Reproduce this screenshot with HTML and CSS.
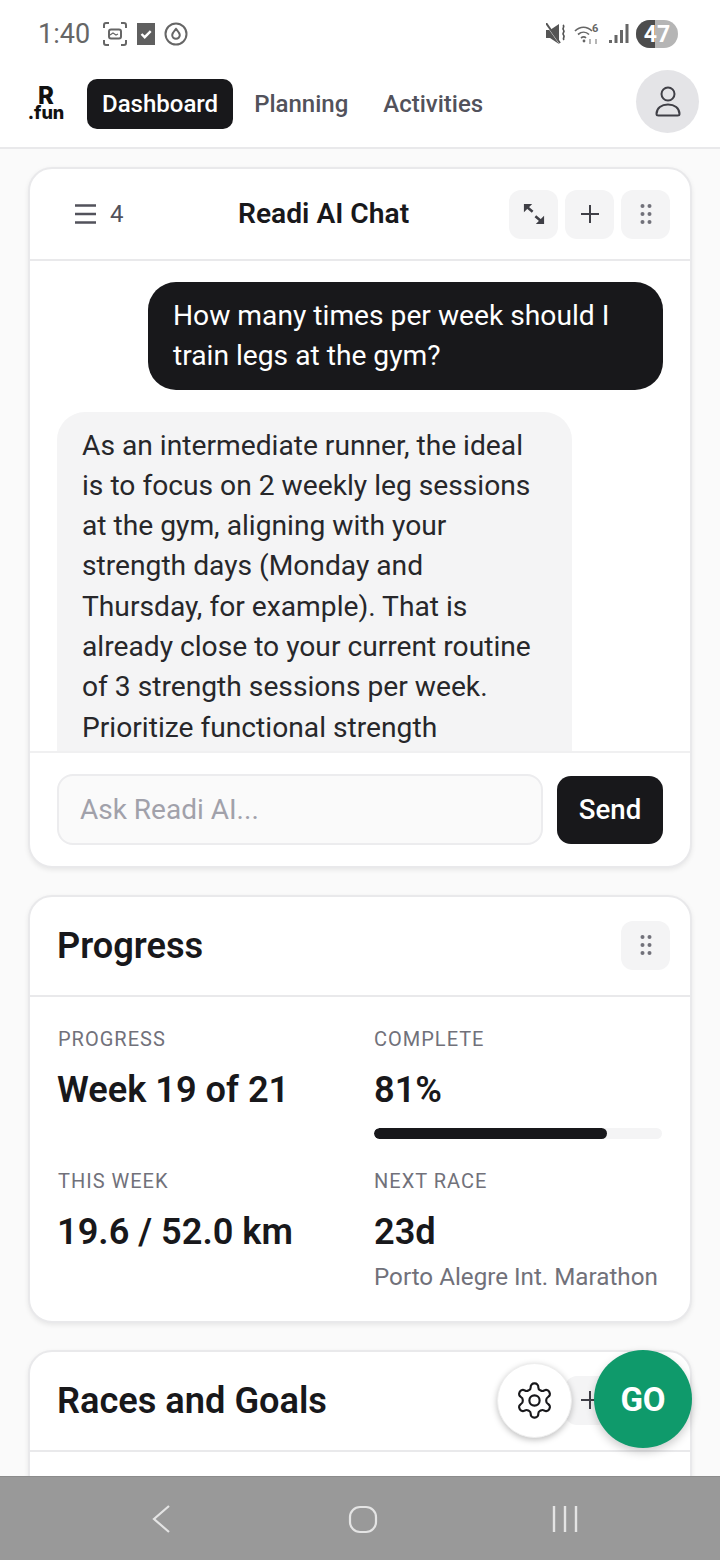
FILE: index.html
```html
<!DOCTYPE html>
<html lang="en">
<head>
    <meta charset="UTF-8">
    <meta name="viewport" content="width=device-width, initial-scale=1.0">
    <title>Readi Dashboard</title>
    <link rel="stylesheet" href="styles.css">
</head>
<body>
    <div class="screen">
        <div class="status-bar">
            <div class="status-left">
                <span class="clock">1:40</span>
                <svg class="status-icon" width="26" height="26" viewBox="0 0 26 26" fill="none" stroke="#666" stroke-width="2">
                    <path d="M2 7V4a2 2 0 0 1 2-2h3M19 2h3a2 2 0 0 1 2 2v3M24 19v3a2 2 0 0 1-2 2h-3M7 24H4a2 2 0 0 1-2-2v-3"/>
                    <rect x="7" y="8.500" width="12" height="9" rx="2"/>
                    <path d="M8 14l3-2 3 2 2-1" stroke-width="1.200"/>
                </svg>
                <svg class="status-icon" width="18" height="22" viewBox="0 0 18 22">
                    <rect width="18" height="22" fill="#5f5f5f"/>
                    <path d="M4.500 11l3.200 3.200 6-6" fill="none" stroke="#fff" stroke-width="2.400"/>
                </svg>
                <svg class="status-icon" width="24" height="24" viewBox="0 0 24 24" fill="none" stroke="#666" stroke-width="2">
                    <circle cx="12" cy="12" r="10.500"/>
                    <path d="M12 7c2 2.400 3.800 3.900 3.800 6a3.800 3.800 0 0 1-7.600 0c0-2.100 1.800-3.600 3.800-6z"/>
                </svg>
            </div>
            <div class="status-right">
                <svg width="21" height="22" viewBox="0 0 21 22" fill="#555">
                    <path d="M0 7h4l9-6v20l-9-6H0z"/>
                    <path d="M0 1l14 20" stroke="#fff" stroke-width="1.400"/>
                    <path d="M0 0l14 20" stroke="#555" stroke-width="2"/>
                    <path d="M17 2c2.500 2-1.500 3 .5 5s-2 3 0 5-1.500 3 .5 5" fill="none" stroke="#555" stroke-width="1.700"/>
                </svg>
                <svg width="28" height="22" viewBox="0 0 28 22" fill="none" stroke="#666" stroke-width="1.700">
                    <path d="M1 8c5-5 12-5 17 0M4 11.500c3.500-3 8-3 11 0M7 15c2-1.500 3.500-1.500 5 0"/>
                    <circle cx="10" cy="18" r="1.400" fill="#666" stroke="none"/>
                    <path d="M16 16v5M22 16v5" stroke="#aaa"/>
                    <text x="18" y="9" class="wifi-six">6</text>
                </svg>
                <svg width="20" height="20" viewBox="0 0 20 20" fill="#666">
                    <rect x="0" y="16" width="3" height="3"/>
                    <rect x="5.500" y="11" width="3" height="8"/>
                    <rect x="11" y="6" width="3" height="13"/>
                    <rect x="16.500" y="0" width="3" height="19"/>
                </svg>
                <div class="battery"><span class="battery-fill"></span><span class="battery-text">47</span></div>
            </div>
        </div>

        <header class="topnav">
            <div class="logo"><span class="logo-r">R</span><span class="logo-fun">.fun</span></div>
            <nav class="nav-links">
                <a class="nav-link active">Dashboard</a>
                <a class="nav-link">Planning</a>
                <a class="nav-link">Activities</a>
            </nav>
            <div class="avatar">
                <svg width="28" height="32" viewBox="0 0 28 32" fill="none" stroke="#3f3f46" stroke-width="2">
                    <circle cx="14" cy="8" r="6.500"/>
                    <path d="M2.500 28c0-6 5-9.500 11.500-9.500s11.500 3.500 11.500 9.500c0 1-1 1.500-2 1.500h-19c-1 0-2-.5-2-1.500z"/>
                </svg>
            </div>
        </header>

        <main class="content">
            <section class="card chat-card">
                <div class="card-head chat-head">
                    <div class="chat-count">
                        <svg width="21" height="20" viewBox="0 0 21 20" stroke="#52525b" stroke-width="2.400">
                            <path d="M0 1.500h21M0 10h21M0 18.500h21"/>
                        </svg>
                        <span>4</span>
                    </div>
                    <h2 class="chat-title">Readi AI Chat</h2>
                    <div class="tool-row">
                        <button class="tool-btn">
                            <svg width="22" height="22" viewBox="0 0 24 24" fill="none" stroke="#3f3f46" stroke-width="2.800">
                                <path d="M5 5l5.500 4.500M19 19l-5.500-4.500"/>
                                <path d="M1 10V1h9z M23 14v9h-9z" fill="#3f3f46" stroke="none"/>
                            </svg>
                        </button>
                        <button class="tool-btn">
                            <svg width="20" height="20" viewBox="0 0 20 20" stroke="#3f3f46" stroke-width="2"><path d="M10 1v18M1 10h18"/></svg>
                        </button>
                        <button class="tool-btn">
                            <svg width="14" height="22" viewBox="0 0 14 22" fill="#71717a">
                                <circle cx="3.500" cy="3" r="2"/><circle cx="10.500" cy="3" r="2"/>
                                <circle cx="3.500" cy="11" r="2"/><circle cx="10.500" cy="11" r="2"/>
                                <circle cx="3.500" cy="19" r="2"/><circle cx="10.500" cy="19" r="2"/>
                            </svg>
                        </button>
                    </div>
                </div>
                <div class="messages">
                    <div class="bubble bubble-user">How many times per week should I train legs at the gym?</div>
                    <div class="bubble bubble-ai">As an intermediate runner, the ideal is to focus on 2 weekly leg sessions at the gym, aligning with your strength days (Monday and Thursday, for example). That is already close to your current routine of 3 strength sessions per week. Prioritize functional strength</div>
                </div>
                <div class="composer">
                    <input class="chat-input" type="text" placeholder="Ask Readi AI...">
                    <button class="send-btn">Send</button>
                </div>
            </section>

            <section class="card">
                <div class="card-head section-head">
                    <h2 class="section-title">Progress</h2>
                    <button class="tool-btn">
                        <svg width="14" height="22" viewBox="0 0 14 22" fill="#71717a">
                            <circle cx="3.500" cy="3" r="2"/><circle cx="10.500" cy="3" r="2"/>
                            <circle cx="3.500" cy="11" r="2"/><circle cx="10.500" cy="11" r="2"/>
                            <circle cx="3.500" cy="19" r="2"/><circle cx="10.500" cy="19" r="2"/>
                        </svg>
                    </button>
                </div>
                <div class="stats">
                    <div class="stat">
                        <div class="stat-label">PROGRESS</div>
                        <div class="stat-value">Week 19 of 21</div>
                    </div>
                    <div class="stat">
                        <div class="stat-label">COMPLETE</div>
                        <div class="stat-value">81%</div>
                        <div class="bar"><div class="bar-fill" style="width: 81%"></div></div>
                    </div>
                    <div class="stat">
                        <div class="stat-label">THIS WEEK</div>
                        <div class="stat-value">19.6 / 52.0 km</div>
                    </div>
                    <div class="stat">
                        <div class="stat-label">NEXT RACE</div>
                        <div class="stat-value">23d</div>
                        <div class="stat-note">Porto Alegre Int. Marathon</div>
                    </div>
                </div>
            </section>

            <section class="card">
                <div class="card-head section-head">
                    <h2 class="section-title">Races and Goals</h2>
                    <div class="tool-row">
                        <button class="tool-btn">
                            <svg width="20" height="20" viewBox="0 0 20 20" stroke="#3f3f46" stroke-width="2"><path d="M10 1v18M1 10h18"/></svg>
                        </button>
                        <button class="tool-btn"></button>
                    </div>
                </div>
                <div class="card-rest"></div>
            </section>
        </main>

        <button class="fab-settings">
            <svg width="41" height="41" viewBox="0 0 24 24" fill="none" stroke="#18181b" stroke-width="1.250" stroke-linecap="round" stroke-linejoin="round">
                <path d="M12.220 2h-.44a2 2 0 0 0-2 2v.18a2 2 0 0 1-1 1.730l-.43.25a2 2 0 0 1-2 0l-.15-.08a2 2 0 0 0-2.730.73l-.22.38a2 2 0 0 0 .73 2.730l.15.1a2 2 0 0 1 1 1.720v.51a2 2 0 0 1-1 1.740l-.15.09a2 2 0 0 0-.73 2.730l.22.38a2 2 0 0 0 2.730.73l.15-.08a2 2 0 0 1 2 0l.43.25a2 2 0 0 1 1 1.730V20a2 2 0 0 0 2 2h.44a2 2 0 0 0 2-2v-.18a2 2 0 0 1 1-1.730l.43-.25a2 2 0 0 1 2 0l.15.08a2 2 0 0 0 2.730-.73l.22-.39a2 2 0 0 0-.73-2.730l-.15-.08a2 2 0 0 1-1-1.740v-.5a2 2 0 0 1 1-1.740l.15-.09a2 2 0 0 0 .73-2.730l-.22-.38a2 2 0 0 0-2.730-.73l-.15.08a2 2 0 0 1-2 0l-.43-.25a2 2 0 0 1-1-1.730V4a2 2 0 0 0-2-2z"/>
                <circle cx="12" cy="12" r="3"/>
            </svg>
        </button>
        <button class="fab-go">GO</button>

        <div class="system-nav">
            <svg width="20" height="30" viewBox="0 0 20 30" fill="none" stroke="#e4e4e4" stroke-width="2.200"><path d="M18 2L3 15l15 13"/></svg>
            <svg class="home-icon" width="30" height="30" viewBox="0 0 30 30" fill="none" stroke="#e4e4e4" stroke-width="2.200"><rect x="2" y="3" width="26" height="25" rx="10"/></svg>
            <svg width="28" height="28" viewBox="0 0 28 28" stroke="#e4e4e4" stroke-width="2.400"><path d="M3 1v26M14 1v26M25 1v26"/></svg>
        </div>
    </div>
</body>
</html>
```

FILE: styles.css
```css
* {
    box-sizing: border-box;
}
html, body {
    margin: 0;
    padding: 0;
}
body {
    font-family: Roboto, "Liberation Sans", sans-serif;
    color: #18181b;
    background: #fff;
}
.screen {
    position: relative;
    width: 720px;
    height: 1560px;
    display: flex;
    flex-direction: column;
    overflow: hidden;
}
.status-bar {
    height: 66px;
    flex-shrink: 0;
    display: flex;
    justify-content: space-between;
    align-items: center;
    padding: 2px 42px 0 38px;
}
.status-left, .status-right {
    display: flex;
    align-items: center;
}
.status-left {
    gap: 9px;
}
.status-right {
    gap: 7px;
}
.clock {
    font-size: 27px;
    color: #666;
    margin-right: 3px;
}
.wifi-six {
    font-size: 11px;
    font-weight: 700;
    fill: #666;
    stroke: none;
}
.battery {
    position: relative;
    width: 42px;
    height: 28px;
    border-radius: 14px;
    background: #b5b5b5;
    overflow: hidden;
    display: flex;
    align-items: center;
    justify-content: center;
}
.battery-fill {
    position: absolute;
    left: 0;
    top: 0;
    bottom: 0;
    width: 19px;
    background: #4d4d4d;
}
.battery-text {
    position: relative;
    color: #fff;
    font-size: 23px;
    font-weight: 700;
}
.topnav {
    height: 83px;
    flex-shrink: 0;
    display: flex;
    align-items: center;
    padding: 0 21px 6px 28px;
    border-bottom: 2px solid #e9e9eb;
}
.logo {
    width: 36px;
    display: flex;
    flex-direction: column;
    align-items: center;
    line-height: 1;
    font-weight: 800;
    color: #111;
    font-family: Inter, Roboto, sans-serif;
}
.logo-r {
    font-size: 24px;
    line-height: 19px;
}
.logo-fun {
    font-size: 18px;
    line-height: 16px;
}
.nav-links {
    display: flex;
    align-items: center;
    margin-left: 23px;
    flex: 1;
    gap: 7px;
}
.nav-link {
    font-size: 24px;
    font-weight: 500;
    color: #52525b;
    padding: 0 14px;
    height: 50px;
    line-height: 50px;
    border-radius: 10px;
}
.nav-link.active {
    background: #18181b;
    color: #fff;
    padding: 0 15px;
}
.avatar {
    width: 63px;
    height: 63px;
    border-radius: 50%;
    background: #e4e4e7;
    display: flex;
    align-items: center;
    justify-content: center;
    margin-bottom: 4px;
}
.content {
    flex: 1;
    min-height: 0;
    overflow: hidden;
    background: #fafafa;
    padding: 18px 28px 0;
    display: flex;
    flex-direction: column;
    gap: 27px;
}
.card {
    flex-shrink: 0;
    background: #fff;
    border: 2px solid #e9e9eb;
    border-radius: 24px;
    box-shadow: 0 2px 5px rgba(0, 0, 0, 0.08);
}
.card-head {
    display: flex;
    align-items: center;
    border-bottom: 2px solid #e9e9eb;
}
.chat-head {
    height: 92px;
    padding: 0 20px 0 45px;
}
.chat-count {
    width: 139px;
    display: flex;
    align-items: center;
    gap: 14px;
    font-size: 24px;
    color: #52525b;
}
.chat-title {
    flex: 1;
    margin: 0 0 2px;
    padding-left: 24px;
    font-size: 28.200px;
    font-weight: 600;
    color: #18181b;
}
.tool-row {
    display: flex;
    gap: 7px;
}
.tool-btn {
    width: 49px;
    height: 49px;
    border: 0;
    border-radius: 12px;
    background: #f4f4f5;
    padding: 0;
    display: flex;
    align-items: center;
    justify-content: center;
}
.messages {
    height: 492px;
    overflow: hidden;
    padding: 21px 27px 0;
    display: flex;
    flex-direction: column;
    gap: 22px;
    border-bottom: 2px solid #f0f0f1;
}
.bubble {
    flex-shrink: 0;
    width: 515px;
    padding: 14px 25px 13px;
    font-size: 28.200px;
    line-height: 40.300px;
    border-radius: 28px;
}
.bubble-user {
    align-self: flex-end;
    background: #18181b;
    color: #fff;
}
/* message runs on under the composer in the real app */
.bubble-ai {
    align-self: flex-start;
    background: #f4f4f5;
    color: #27272a;
    padding-right: 37px;
    padding-bottom: 80px;
}
.composer {
    height: 113px;
    display: flex;
    align-items: center;
    gap: 14px;
    padding: 0 27px;
}
.chat-input {
    flex: 1;
    min-width: 0;
    height: 71px;
    border: 2px solid #ececee;
    border-radius: 16px;
    background: #fafafa;
    padding: 0 21px;
    font-family: inherit;
    font-size: 28px;
}
.chat-input::placeholder {
    color: #a1a1aa;
}
.send-btn {
    width: 106px;
    height: 68px;
    border: 0;
    border-radius: 14px;
    background: #18181b;
    color: #fff;
    font-family: inherit;
    font-size: 27.600px;
    font-weight: 500;
}
.section-head {
    height: 100px;
    justify-content: space-between;
    padding: 0 20px 2px 27px;
}
.section-title {
    margin: 0;
    font-size: 36.200px;
    font-weight: 600;
    color: #18181b;
}
.stats {
    display: grid;
    grid-template-columns: 316px 289px;
    row-gap: 30px;
    padding: 30px 28px 28px 27px;
}
.stat-label {
    padding-left: 1px;
    font-size: 20px;
    letter-spacing: 1px;
    line-height: 24px;
    color: #71717a;
}
.stat-value {
    margin-top: 18px;
    font-size: 36.200px;
    font-weight: 600;
    line-height: 42px;
    color: #18181b;
}
.stat:nth-child(even) {
    margin-left: 1px;
}
.stat:nth-child(even) .stat-label {
    padding-left: 0;
}
.bar {
    height: 11px;
    margin-top: 17px;
    background: #f4f4f5;
    border-radius: 6px;
    overflow: hidden;
}
.bar-fill {
    height: 100%;
    background: #18181b;
    border-radius: 6px;
}
.stat-note {
    margin-top: 8px;
    font-size: 24.200px;
    line-height: 32px;
    color: #71717a;
    white-space: nowrap;
}
.card-rest {
    height: 200px;
}
.fab-settings {
    position: absolute;
    left: 497px;
    top: 1363px;
    width: 75px;
    height: 75px;
    border-radius: 50%;
    border: 1px solid #eee;
    background: #fff;
    box-shadow: 0 2px 6px rgba(0, 0, 0, 0.25);
    padding: 0;
    display: flex;
    align-items: center;
    justify-content: center;
}
.fab-go {
    position: absolute;
    left: 594px;
    top: 1350px;
    width: 98px;
    height: 98px;
    border-radius: 50%;
    border: 0;
    background: #0f9a6b;
    color: #fff;
    font-family: inherit;
    font-size: 33px;
    font-weight: 700;
    box-shadow: 0 4px 10px rgba(0, 0, 0, 0.2);
}
.system-nav {
    height: 84px;
    flex-shrink: 0;
    background: #999;
    border-top: 1px solid #8c8c8c;
    display: flex;
    align-items: center;
    padding: 0 141px 0 151px;
    justify-content: space-between;
}
.home-icon {
    margin-left: 3px;
}
```
